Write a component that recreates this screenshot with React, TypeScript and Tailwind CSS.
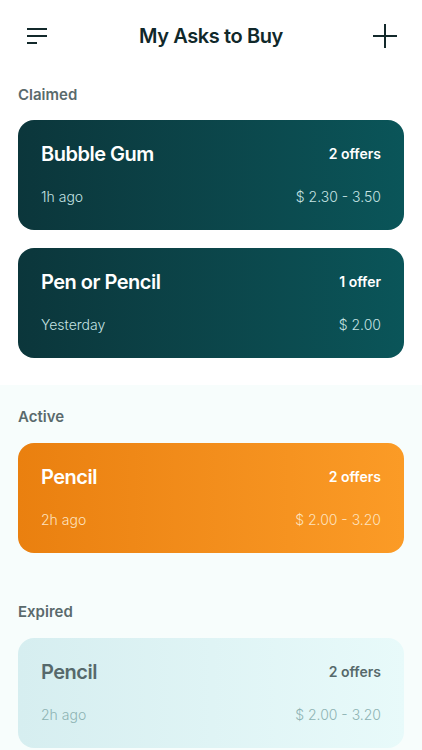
import { ReactNode } from 'react';

type Variant = 'claimed' | 'active' | 'expired';

interface AskCardProps {
  title: string;
  offers: string;
  time: string;
  price: string;
  variant: Variant;
}

const cardStyles: Record<Variant, { box: string; title: string; offers: string; sub: string }> = {
  claimed: {
    box: 'bg-gradient-to-r from-[#0b363b] to-[#0a5559]',
    title: 'text-white',
    offers: 'text-white',
    sub: 'text-[#c5e3e3]'
  },
  active: {
    box: 'bg-gradient-to-r from-[#ea800f] to-[#fb9b26]',
    title: 'text-white',
    offers: 'text-white',
    sub: 'text-[#fde2bf]'
  },
  expired: {
    box: 'bg-gradient-to-r from-[#d6eef0] to-[#e8fafa]',
    title: 'text-[#56696b]',
    offers: 'text-[#56696b]',
    sub: 'text-[#8db3b3]'
  }
};

const AskCard = ({ title, offers, time, price, variant }: AskCardProps) => {
  const s = cardStyles[variant];
  return (
    <div className={`h-[110px] rounded-[16px] px-[23px] pt-[21px] ${s.box}`}>
      <div className="flex items-center justify-between">
        <span className={`text-[20px] leading-[26px] font-semibold tracking-[-0.5px] ${s.title}`}>
          {title}
        </span>
        <span className={`text-[14px] leading-[26px] font-semibold ${s.offers}`}>{offers}</span>
      </div>
      <div className="mt-[20px] flex items-center justify-between">
        <span className={`text-[14px] leading-[20px] font-light ${s.sub}`}>{time}</span>
        <span className={`text-[14px] leading-[20px] font-light ${s.sub}`}>{price}</span>
      </div>
    </div>
  );
};

const SectionLabel = ({ children }: { children: ReactNode }) => (
  <div className="text-[15px] leading-[20px] font-semibold text-[#5a6a6c]">{children}</div>
);

const App = () => {
  return (
    <div
      className="w-[422px] min-h-[750px] bg-white"
      style={{ fontFamily: 'Inter, "Noto Sans", sans-serif' }}
    >
      <header className="h-[72px] flex items-center justify-between px-[24px]">
        <button className="w-[26px] h-[26px] flex items-center justify-center">
          <svg width="22" height="18" viewBox="0 0 22 18" fill="none">
            <path d="M1 2h20M1 9h20M1 16h10" stroke="#13292b" strokeWidth="2" />
          </svg>
        </button>
        <h1 className="text-[20px] font-semibold text-[#10282a] tracking-[-0.4px]">
          My Asks to Buy
        </h1>
        <button className="w-[26px] h-[26px] flex items-center justify-center">
          <svg width="24" height="24" viewBox="0 0 24 24" fill="none">
            <path d="M12 0v24M0 12h24" stroke="#13292b" strokeWidth="2" />
          </svg>
        </button>
      </header>

      <section className="px-[18px] pt-[13px] pb-[27px]">
        <SectionLabel>Claimed</SectionLabel>
        <div className="mt-[15px] flex flex-col gap-[18px]">
          <AskCard
            variant="claimed"
            title="Bubble Gum"
            offers="2 offers"
            time="1h ago"
            price="$ 2.30 - 3.50"
          />
          <AskCard
            variant="claimed"
            title="Pen or Pencil"
            offers="1 offer"
            time="Yesterday"
            price="$ 2.00"
          />
        </div>
      </section>

      <div className="bg-[#f7fdfc] px-[18px] pt-[22px] pb-[3px]">
        <SectionLabel>Active</SectionLabel>
        <div className="mt-[16px]">
          <AskCard
            variant="active"
            title="Pencil"
            offers="2 offers"
            time="2h ago"
            price="$ 2.00 - 3.20"
          />
        </div>

        <div className="mt-[49px]">
          <SectionLabel>Expired</SectionLabel>
        </div>
        <div className="mt-[16px]">
          <AskCard
            variant="expired"
            title="Pencil"
            offers="2 offers"
            time="2h ago"
            price="$ 2.00 - 3.20"
          />
        </div>
      </div>
    </div>
  );
};

export default App;
